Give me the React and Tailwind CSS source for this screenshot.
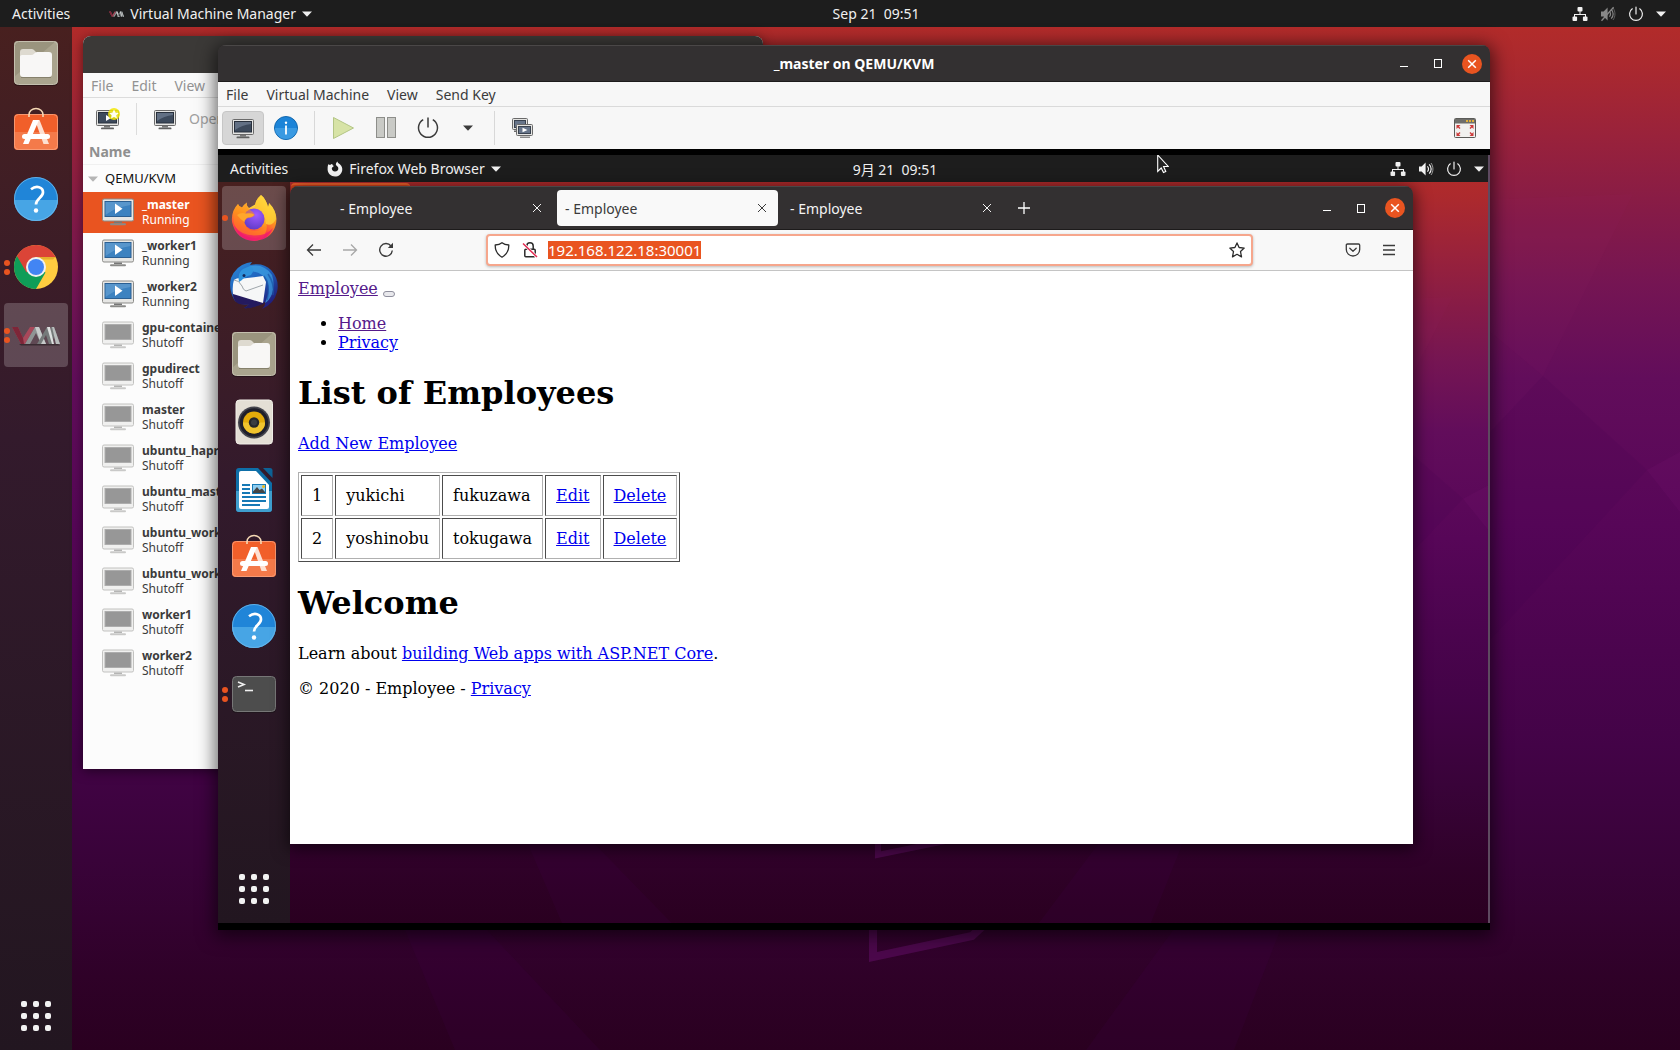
import { useEffect, useRef } from "react";

/* ---------- wallpaper ---------- */

function Wallpaper({ id }) {
  return (
    <svg
      className="absolute inset-0 h-full w-full"
      viewBox="0 0 1680 1050"
      preserveAspectRatio="none"
      aria-hidden="true"
    >
      <defs>
        <linearGradient id={id} x1="0" y1="0" x2="0" y2="1">
          <stop offset="0" stopColor="#b72d27" />
          <stop offset="0.06" stopColor="#ab292e" />
          <stop offset="0.13" stopColor="#99223b" />
          <stop offset="0.2" stopColor="#861b47" />
          <stop offset="0.27" stopColor="#751553" />
          <stop offset="0.36" stopColor="#620d5b" />
          <stop offset="0.5" stopColor="#570658" />
          <stop offset="0.62" stopColor="#4b044e" />
          <stop offset="0.71" stopColor="#430347" />
          <stop offset="0.82" stopColor="#390339" />
          <stop offset="0.93" stopColor="#2f0128" />
          <stop offset="1" stopColor="#2a0020" />
        </linearGradient>
      </defs>
      <rect width="1680" height="1050" fill={`url(#${id})`} />
      <polygon points="1543,376 1647,470 1490,640 1380,700 1490,432" fill="#3c0050" opacity="0.1" />
      <polygon points="1633,194 1543,376 1380,240 1480,200" fill="#b0307a" opacity="0.04" />
      <polygon points="1680,452 1647,470 1680,512" fill="#b0309a" opacity="0.07" />
      <polygon points="400,900 405,930 455,1050 600,1050 487,930 470,900" fill="#4a0058" opacity="0.12" />
      <polygon points="1195,900 1086,1050 1234,1050 1284,920" fill="#4a0058" opacity="0.12" />
      <path d="M873 880 V957 L972 936 L1000 910" fill="none" stroke="#5e0d60" strokeWidth="8" opacity="0.6" />
    </svg>
  );
}

/* ---------- shared pieces ---------- */

function CaretDown({ className = "" }) {
  return (
    <svg viewBox="0 0 10 6" className={`h-[6px] w-[10px] ${className}`} aria-hidden="true">
      <path d="M0 0.5H10L5 5.8Z" fill="currentColor" />
    </svg>
  );
}

function NetworkIcon() {
  return (
    <svg viewBox="0 0 16 16" className="size-4" aria-hidden="true">
      <g fill="#f2f2f2">
        <rect x="5.5" y="1" width="5" height="4.4" rx="1" />
        <rect x="0.5" y="10.6" width="4.6" height="4.4" rx="1" />
        <rect x="10.9" y="10.6" width="4.6" height="4.4" rx="1" />
        <path d="M7.5 5h1v3H14v3h-1V9H3v2H2V8h5.5z" />
      </g>
    </svg>
  );
}

function VolumeIcon({ muted }) {
  return (
    <svg viewBox="0 0 16 16" className="size-4" aria-hidden="true" opacity={muted ? 0.5 : 1}>
      <path d="M1 5.4h2.6L7.6 1.6V14.4L3.6 10.6H1z" fill="#f2f2f2" />
      <path d="M9.4 5.4a3.6 3.6 0 0 1 0 5.2M11.2 3.4c2.6 2.6 2.6 6.6 0 9.2" fill="none" stroke="#f2f2f2" strokeWidth="1.2" />
      <path d="M13 2c2.6 3.6 2.6 8.4 0 12" fill="none" stroke="#f2f2f2" strokeWidth="1" opacity="0.6" />
      {muted && <path d="M1.5 14.8L13.6 1.2" stroke="#f2f2f2" strokeWidth="1.3" />}
    </svg>
  );
}

function PowerIcon({ className = "size-4" }) {
  return (
    <svg viewBox="0 0 16 16" className={className} fill="none" stroke="currentColor" strokeWidth="1.2" strokeLinecap="round" aria-hidden="true">
      <path d="M4.3 2.8a6.4 6.4 0 1 0 7.4 0M8 1v7" />
    </svg>
  );
}

function VirtLogo({ className }) {
  return (
    <svg viewBox="0 0 48 22" className={className} aria-hidden="true">
      <path d="M7 20L46 20L48 21.5H9z" fill="#000" opacity="0.4" />
      <path d="M0 3H6L11 14L18 3H23L13 20H9Z" fill="#a8485a" />
      <path d="M0 3H6L11 14L12 20H9Z" fill="#7d2638" />
      <path d="M23 3L13 20H18L24 9L29 20H34L27 3Z" fill="#8f9494" />
      <path d="M23 3L29 20H34L27 3Z" fill="#c6caca" />
      <path d="M35 3L25 20H29L34 11L37 20H40L42 12L44 20H48L42 3H39L38 9L38 3Z" fill="#757a7a" />
      <path d="M35 3L40 20H42L38 3Z" fill="#dde0e0" />
      <path d="M40 3L44 20H48L42 3Z" fill="#b9bdbd" />
    </svg>
  );
}

function FirefoxSymbolic() {
  return (
    <svg viewBox="0 0 16 16" className="size-4" aria-hidden="true">
      <path
        d="M1.2 3.2C2 3.7 2.6 3.9 3.2 4C3.7 3.4 4.5 3 5.4 3.1C5.1 3.9 5.6 4.6 6.9 4.9C6.2 5.7 5.3 5.9 4.8 7C4.7 9 6 10.6 8 10.6C10.2 10.6 11.6 9 11.3 7C11.1 5.6 9.9 5.1 9.1 4.3C8.5 3.2 9 1.6 10.4 0.4C10.7 1.9 12 2.3 13.1 3.4C14.8 5 15.6 7 15.2 9.4C14.5 13 11.6 15.6 8 15.6C4 15.6 0.8 12.6 0.6 8.6C0.5 6.5 0.7 4.8 1.2 3.2Z"
        fill="#f2f2f2"
      />
    </svg>
  );
}

function TopBar({ appIcon, appName, clock, muted, clockPad, tail }) {
  return (
    <header className="flex h-[27px] shrink-0 items-center bg-[#1d1d1d] text-sm text-[#f0f0f0]">
      <div className="flex flex-1 items-center">
        <button className="ml-3 whitespace-nowrap">Activities</button>
        <button className="ml-[39px] flex items-center gap-1.5 whitespace-nowrap">
          {appIcon}
          <span>{appName}</span>
          <CaretDown />
        </button>
      </div>
      <button className={`shrink-0 whitespace-pre ${clockPad}`}>{clock}</button>
      <div className={`flex flex-1 items-center justify-end gap-3 ${tail}`}>
        <NetworkIcon />
        <VolumeIcon muted={muted} />
        <PowerIcon />
        <CaretDown />
      </div>
    </header>
  );
}

function WindowControls() {
  return (
    <div className="flex items-center gap-[14px] pr-2 text-white">
      <button aria-label="Minimize" className="grid size-5 place-items-center">
        <span className="mt-[5px] h-px w-2 bg-white" />
      </button>
      <button aria-label="Maximize" className="grid size-5 place-items-center">
        <span className="h-[9px] w-2 border border-white" />
      </button>
      <button aria-label="Close" className="grid size-5 place-items-center rounded-full bg-[#e95420]">
        <svg viewBox="0 0 10 10" className="size-[10px]" stroke="#fff" strokeWidth="1.5" aria-hidden="true">
          <path d="M1.2 1.2L8.8 8.8M8.8 1.2L1.2 8.8" />
        </svg>
      </button>
    </div>
  );
}

/* ---------- dock icons ---------- */

function FilesIcon() {
  return (
    <svg viewBox="0 0 48 48" className="size-12" aria-hidden="true">
      <rect x="2" y="3" width="44" height="44" rx="4" fill="#000" opacity="0.3" />
      <rect x="2" y="2" width="44" height="43.5" rx="4" fill="#aaa48e" />
      <path d="M2 38V6a4 4 0 0 1 4-4h38Z" fill="#9a947e" />
      <rect x="2.5" y="2.5" width="43" height="43" rx="4" fill="none" stroke="#c4bfae" />
      <path d="M8 13a3 3 0 0 1 3-3h9q1.5 0 2.5 1.5L25 14H38V20H8Z" fill="#dedad0" />
      <path d="M8 17.500q0-1.500 2-1.500h9q2 0 3-1.200T25 13h12a3 3 0 0 1 3 3v19a3 3 0 0 1-3 3H11a3 3 0 0 1-3-3Z" fill="#f8f7f6" />
      <path d="M9 38.500h30" stroke="#6f6a57" strokeWidth="1" opacity="0.6" />
    </svg>
  );
}

function SoftwareIcon() {
  return (
    <svg viewBox="0 2 48 48" className="size-12" aria-hidden="true">
      <rect x="2" y="9" width="44" height="36" rx="4" fill="#f15f2a" />
      <path d="M2 27h44v14a4 4 0 0 1-4 4H6a4 4 0 0 1-4-4z" fill="#f47a4a" />
      <rect x="2.5" y="9.5" width="43" height="35" rx="4" fill="none" stroke="#f9a47f" opacity="0.8" />
      <path d="M17 12V9.500a7 6 0 0 1 14 0v2.500" fill="none" stroke="#f6d9b5" strokeWidth="1.600" />
      <path d="M23 15H27.500L37 39H31.500Z" fill="#fde0d2" />
      <path d="M21 15H27L16.500 39H11Z" fill="#fff" />
      <rect x="10" y="29" width="28" height="5" rx="2.500" fill="#fff" />
    </svg>
  );
}

function HelpIcon() {
  return (
    <svg viewBox="0 0 48 48" className="size-12" aria-hidden="true">
      <circle cx="24" cy="24" r="22" fill="#2085d8" />
      <path d="M2 25a22 21 0 0 0 44 0z" fill="#47a5e5" />
      <circle cx="24" cy="24" r="21.5" fill="none" stroke="#6fb9ea" opacity="0.8" />
      <path d="M19 14.200C24.500 10 31 12 31 17.300C31 22.700 24 23.500 24 29.500" fill="none" stroke="#fff" strokeWidth="2.700" />
      <circle cx="24" cy="35.500" r="2.200" fill="#fff" />
    </svg>
  );
}

function ChromeIcon() {
  return (
    <svg viewBox="0 0 48 48" className="size-12" aria-hidden="true">
      <circle cx="24" cy="24" r="22" fill="#ffcd40" />
      <path d="M24 24L4.950 13A22 22 0 0 0 24 46L33.500 29.500Z" fill="#0f9d58" />
      <path d="M4.950 13A22 22 0 0 1 43.500 14H24L14.500 29.500Z" fill="#db4437" />
      <path d="M24 14H43.500L41 16.500H29Z" fill="#b5780b" opacity="0.35" />
      <circle cx="24" cy="24" r="10" fill="#f1f1f1" />
      <circle cx="24" cy="24" r="8" fill="#4285f4" />
    </svg>
  );
}

function FirefoxIcon() {
  return (
    <svg viewBox="0 0 48 48" className="size-12" aria-hidden="true">
      <defs>
        <linearGradient id="ffBody" x1="0.8" y1="0" x2="0.3" y2="1">
          <stop offset="0.1" stopColor="#ffe04a" />
          <stop offset="0.45" stopColor="#ff9a1f" />
          <stop offset="0.75" stopColor="#ff4a3e" />
          <stop offset="1" stopColor="#e31587" />
        </linearGradient>
        <radialGradient id="ffGlobe" cx="0.6" cy="0.3" r="0.8">
          <stop offset="0" stopColor="#a05bff" />
          <stop offset="1" stopColor="#5a38c4" />
        </radialGradient>
      </defs>
      <path d="M8 10Q9 13 12 13.500Q14 10.500 17 8.500Q16 12 19 14L28 9L42 22V32Q36 47 24 47Q6 46 2 28Q1 17 8 10Z" fill="url(#ffBody)" />
      <path d="M31 1C35 4 37 9 38 13Q39 11 39 9Q46 16 46.500 25Q46 41 31 46Q39 38 36 27Q33 18 25 14Q24 7 31 1Z" fill="url(#ffBody)" />
      <path d="M31 1C35 4 37 9 38 13Q39 11 39 9Q46 16 46 25Q42 33 36 30Q36 20 25 14Q24 7 31 1Z" fill="#ffd93b" opacity="0.75" />
      <circle cx="24" cy="25" r="10.5" fill="url(#ffGlobe)" />
      <path d="M8 10Q9 13 12 13.500Q14 10.500 17 8.500Q16 13 20 16Q24 18 25 21Q23 24 18 24Q14 26 15 30Q17 37 25 37Q33 37 37 30Q38 41 26 44Q10 43 4 30Q2 17 8 10Z" fill="#ff8a1c" opacity="0.55" />
      <path d="M7 21Q11 18 16 19.500Q21 18.500 24 20.500Q23.500 23 18 23.500Q14.500 25 14.500 28Q10 25 7 21Z" fill="#ffa62b" />
      <path d="M4 32Q10 46 24 46.500Q38 46 43 34Q36 42 24 41.500Q11 41 4 32Z" fill="#f0196f" opacity="0.75" />
    </svg>
  );
}

function ThunderbirdIcon() {
  return (
    <svg viewBox="0 0 48 48" className="size-12" aria-hidden="true">
      <defs>
        <linearGradient id="tbBody" x1="0" y1="0" x2="0.7" y2="1">
          <stop offset="0" stopColor="#2c8ad8" />
          <stop offset="0.5" stopColor="#1f62bd" />
          <stop offset="1" stopColor="#221d7c" />
        </linearGradient>
      </defs>
      <path d="M5 39Q-2 28 1 16Q6 4 17 1L22 0L20 3Q33 0 41 8Q50 18 47 30Q44 42 32 47Q36 43 35 40Q22 47 14 46Q18 44 19 42Q12 44 5 39Z" fill="url(#tbBody)" />
      <path d="M5 39Q2 33 3 29L35 41Q22 47 14 46Q18 44 19 42Q9 44 5 39Z" fill="#241a5e" />
      <path d="M20 4Q34 1 42 13Q45 22 42 32Q39 39 35 41Q41 30 37 19Q32 10 20 9Z" fill="#3fa4e6" opacity="0.7" />
      <path d="M34 14Q41 23 37 38M38 12Q45 22 43 33" fill="none" stroke="#1a55a8" strokeWidth="1.5" opacity="0.7" />
      <path d="M4 18Q8 15 13 16.500L33 14L36 20L33 41L3 32Q2 24 4 18Z" fill="#f6f7f7" />
      <path d="M4 18Q9 18 12 24Q13 28 16 29L33 23" fill="none" stroke="#9ea5aa" strokeWidth="1" />
      <path d="M9 20Q7 11 13 7L20 4Q26 7 21 13Q14 15 12 18Z" fill="#2f93dc" />
      <circle cx="14" cy="13.5" r="1.5" fill="#14285a" />
    </svg>
  );
}

function RhythmboxIcon() {
  return (
    <svg viewBox="0 0 48 48" className="size-12" aria-hidden="true">
      <rect x="6" y="2" width="36.5" height="44" rx="3.5" fill="#e4dfd5" stroke="#f2efe9" />
      <circle cx="24" cy="24.5" r="16" fill="#45454d" />
      <circle cx="24" cy="24.5" r="14.3" fill="#1f1f2b" />
      <circle cx="24" cy="24.5" r="11" fill="#e3ab0a" />
      <path d="M13 24.500a11 11 0 0 0 22 0z" fill="#f0c32e" />
      <circle cx="24" cy="24.5" r="5.2" fill="#25262b" />
      <circle cx="24" cy="24.5" r="3" fill="#3b3d42" />
    </svg>
  );
}

function WriterIcon() {
  return (
    <svg viewBox="0 0 48 48" className="size-12" aria-hidden="true">
      <path d="M9 2H28L42 17V43a3 3 0 0 1-3 3H9a3 3 0 0 1-3-3V5a3 3 0 0 1 3-3Z" fill="#0e6fa8" />
      <path d="M6 25H42V43a3 3 0 0 1-3 3H9a3 3 0 0 1-3-3Z" fill="#3f9fcf" />
      <path d="M33 2H40a2.500 2.500 0 0 1 2.500 2.500V12Z" fill="#0d6296" />
      <path d="M11 5H26L39 19V41a2 2 0 0 1-2 2H11a2 2 0 0 1-2-2V7a2 2 0 0 1 2-2Z" fill="#fff" />
      <g fill="#1679b5">
        <rect x="12" y="18" width="8" height="2" />
        <rect x="12" y="22" width="8" height="2" />
        <rect x="12" y="26" width="8" height="2" />
        <rect x="12" y="30" width="24" height="2" />
        <rect x="12" y="34" width="24" height="2" />
        <rect x="12" y="38" width="18" height="2" />
        <rect x="22" y="18" width="14" height="10" />
      </g>
      <rect x="23" y="19" width="12" height="8" fill="#8fcdf0" />
      <circle cx="33.5" cy="20.5" r="1.5" fill="#f0b81c" />
      <path d="M23 27V25.500L27 21L29.500 24L32 22.500L35 26V27Z" fill="#444" />
    </svg>
  );
}

function TerminalIcon() {
  return (
    <svg viewBox="0 0 48 48" className="size-12" aria-hidden="true">
      <rect x="2" y="7" width="44" height="36" rx="4" fill="#111" opacity="0.4" />
      <rect x="2.5" y="6.5" width="43" height="35" rx="4" fill="#4d4d4d" stroke="#777" />
      <path d="M8 12L14 14.500L8 17" fill="none" stroke="#f0f0f0" strokeWidth="1.6" />
      <path d="M15 20.500H23" stroke="#f0f0f0" strokeWidth="1.6" />
    </svg>
  );
}

function Dock({ apps }) {
  return (
    <nav
      aria-label="Dock"
      className="relative flex w-[72px] shrink-0 flex-col gap-1 bg-linear-to-b from-[#48201f] from-0% via-[#331a2c] via-40% to-[#221620] px-1 pt-1 pb-0.5"
    >
      {apps.map((a) => (
        <button
          key={a.name}
          aria-label={a.name}
          className={`relative grid size-16 shrink-0 place-items-center rounded ${a.active ? "bg-white/20" : ""}`}
        >
          <span className="absolute inset-y-0 left-0 flex w-1.5 flex-col justify-center gap-[3px]">
            {Array.from({ length: a.dots || 0 }, (_, i) => (
              <span key={i} className="size-1.5 rounded-full bg-[#e95420]" />
            ))}
          </span>
          {a.icon}
        </button>
      ))}
      <button aria-label="Show Applications" className="mt-auto grid size-16 shrink-0 place-content-center gap-1.5 [grid-template-columns:repeat(3,6px)]">
        {Array.from({ length: 9 }, (_, i) => (
          <span key={i} className="size-1.5 rounded-[2px] bg-[#f2f2f2]" />
        ))}
      </button>
    </nav>
  );
}

/* ---------- toolbar icons ---------- */

function ConsoleIcon({ className = "size-6" }) {
  return (
    <svg viewBox="0 0 24 24" className={className} aria-hidden="true">
      <rect x="1.5" y="3.5" width="21" height="15" rx="1" fill="#e4e4e2" stroke="#6a6a6a" />
      <rect x="3.5" y="5.5" width="17" height="10.5" fill="#3d4a5c" stroke="#28303c" />
      <path d="M4 6H20V8Q11 9 4 14Z" fill="#76849a" opacity="0.65" />
      <path d="M9 19h6v1.500h-6z" fill="#777" />
      <rect x="5.5" y="20.5" width="13" height="1.8" rx="0.9" fill="#5f6060" />
    </svg>
  );
}

function NewVmIcon() {
  return (
    <svg viewBox="0 0 24 24" className="size-6" aria-hidden="true">
      <rect x="0.5" y="3.5" width="22" height="15" rx="1" fill="#e4e4e2" stroke="#6a6a6a" />
      <rect x="2.5" y="5.5" width="18" height="10.5" fill="#3d4a5c" stroke="#28303c" />
      <path d="M10 8L15 11L10 14Z" fill="#fff" />
      <path d="M8 19h6v1.500H8z" fill="#777" />
      <rect x="5" y="20.5" width="13" height="1.8" rx="0.9" fill="#5f6060" />
      <circle cx="18" cy="7" r="6" fill="#f2e600" opacity="0.85" />
      <path d="M18 2.500L19.500 5.500L22.800 6L20.400 8.300L21 11.600L18 10L15 11.600L15.600 8.300L13.200 6L16.500 5.500Z" fill="#fffef0" />
    </svg>
  );
}

function InfoIcon() {
  return (
    <svg viewBox="0 0 24 24" className="size-6" aria-hidden="true">
      <circle cx="12" cy="12" r="11.5" fill="#1c84d8" stroke="#1468ad" />
      <path d="M1 12a11 11 0 0 0 22 0z" fill="#3a9ae2" />
      <circle cx="12" cy="6.8" r="1.2" fill="#fff" />
      <rect x="11.1" y="9.5" width="1.8" height="9" fill="#fff" />
    </svg>
  );
}

function PlayIcon() {
  return (
    <svg viewBox="0 0 24 24" className="size-6" aria-hidden="true">
      <path d="M2.500 1.500L22.500 12L2.500 22.500Z" fill="#d7e3a6" stroke="#b3c585" />
    </svg>
  );
}

function PauseIcon() {
  return (
    <svg viewBox="0 0 24 24" className="size-6" fill="#c9cac6" stroke="#8d8e8a" aria-hidden="true">
      <rect x="2.5" y="1.5" width="8" height="20" />
      <rect x="13.5" y="1.5" width="8" height="20" />
    </svg>
  );
}

function ShutDownIcon() {
  return (
    <svg viewBox="0 0 24 24" className="size-6" fill="none" stroke="currentColor" strokeWidth="1.5" aria-hidden="true">
      <path d="M7.200 3.600a9.500 9.500 0 1 0 9.600 0M12 1.500v10" />
    </svg>
  );
}

function SnapshotsIcon() {
  return (
    <svg viewBox="0 0 24 24" className="size-6" aria-hidden="true">
      <rect x="1.5" y="2.5" width="15" height="11" rx="1" fill="#e4e4e2" stroke="#6a6a6a" />
      <rect x="3.5" y="4.5" width="11" height="7" fill="#67758a" stroke="#39424f" />
      <rect x="3" y="14.5" width="5" height="1.5" fill="#6a6a6a" />
      <rect x="5.5" y="8.5" width="16" height="11" rx="1" fill="#e4e4e2" stroke="#6a6a6a" />
      <rect x="7.5" y="10.5" width="12" height="7" fill="#67758a" stroke="#39424f" />
      <path d="M11.500 11.800L16.500 14L11.500 16.200Z" fill="#fff" />
      <rect x="9" y="20.5" width="10" height="1.5" fill="#8a8a8a" />
    </svg>
  );
}

function FullscreenIcon() {
  return (
    <svg viewBox="0 0 24 24" className="size-6" aria-hidden="true">
      <rect x="1.5" y="2.5" width="21" height="19" rx="1" fill="#f1f1ef" stroke="#5b5b58" />
      <rect x="2" y="3" width="20" height="4.5" fill="#6e6e6a" />
      <g fill="#e0b03c">
        <rect x="13" y="4" width="2" height="2" />
        <rect x="16" y="4" width="2" height="2" />
        <rect x="19" y="4" width="2" height="2" />
      </g>
      <g fill="#cc3b3b">
        <path d="M3.500 9H7.500L6 10.500L7.500 12L6.500 13L5 11.500L3.500 13Z" />
        <path d="M20.500 9H16.500L18 10.500L16.500 12L17.500 13L19 11.500L20.500 13Z" />
        <path d="M3.500 20H7.500L6 18.500L7.500 17L6.500 16L5 17.500L3.500 16Z" />
        <path d="M20.500 20H16.500L18 18.500L16.500 17L17.500 16L19 17.500L20.500 16Z" />
      </g>
    </svg>
  );
}

function GuestIcon({ running }) {
  return (
    <svg viewBox="0 0 32 28" className="h-7 w-8 shrink-0" aria-hidden="true">
      <rect x="0.5" y="1" width="31" height="22" rx="1.5" fill={running ? "#e6e6e4" : "#f0f0ef"} stroke={running ? "#8b8b88" : "#c2c2c0"} />
      <rect x="3" y="3.5" width="26" height="15" fill={running ? "#3c82c0" : "#979797"} stroke={running ? "#2b5f92" : "#adadad"} />
      {running && <path d="M3.500 4H28.500V7Q14 9 3.500 17Z" fill="#73a9d8" opacity="0.5" />}
      {running && <path d="M13 5.500L20.500 10.800L13 16Z" fill="#fff" />}
      <path d="M12 23.500h8v1.500h-8z" fill={running ? "#777" : "#b5b5b4"} />
      <rect x="8" y="25.3" width="16" height="2" rx="1" fill={running ? "#8a8a88" : "#c9c9c8"} />
    </svg>
  );
}

/* ---------- virtual machine manager ---------- */

const machines = [
  { name: "_master", state: "Running" },
  { name: "_worker1", state: "Running" },
  { name: "_worker2", state: "Running" },
  { name: "gpu-container", state: "Shutoff" },
  { name: "gpudirect", state: "Shutoff" },
  { name: "master", state: "Shutoff" },
  { name: "ubuntu_haproxy", state: "Shutoff" },
  { name: "ubuntu_master", state: "Shutoff" },
  { name: "ubuntu_worker1", state: "Shutoff" },
  { name: "ubuntu_worker2", state: "Shutoff" },
  { name: "worker1", state: "Shutoff" },
  { name: "worker2", state: "Shutoff" },
];

function ManagerWindow() {
  return (
    <section
      aria-label="Virtual Machine Manager"
      className="absolute top-[9px] left-[11px] w-[680px] overflow-hidden rounded-t-lg bg-[#fcfcfc] pb-[85px] shadow-[0_2px_12px_rgba(0,0,0,0.5)]"
    >
      <div className="h-[37px] bg-[#3b3937]" />
      <div className="flex h-[25px] items-center gap-0.5 border-b border-[#dcdcdc] bg-[#fafafa] pt-0.5 text-sm text-[#929292]">
        <button className="px-2">File</button>
        <button className="px-2">Edit</button>
        <button className="px-2">View</button>
      </div>
      <div className="flex h-[42px] items-center bg-[#fafafa] text-sm text-[#a0a0a0]">
        <button aria-label="New virtual machine" className="ml-[13px]">
          <NewVmIcon />
        </button>
        <span className="mx-4 h-8 w-px bg-[#dcdcdc]" />
        <button className="flex items-center gap-3">
          <ConsoleIcon />
          Open
        </button>
      </div>
      <div className="flex h-[25px] items-center border-b border-[#f0f0f0] px-1.5 text-sm font-bold text-[#8f8f8f]">Name</div>
      <div className="flex h-[27px] items-center gap-[7px] pl-[5px] text-[13px] text-[#111]">
        <CaretDown className="text-[#b5b5b5]" />
        QEMU/KVM
      </div>
      <ul>
        {machines.map((m, i) => (
          <li
            key={m.name}
            className={`flex h-[41px] items-center gap-2 pb-0.5 pl-[19px] text-xs leading-[15px] ${i === 0 ? "bg-[#e95420] text-white" : "text-[#3b3b3b]"}`}
          >
            <GuestIcon running={m.state === "Running"} />
            <div>
              <div className="font-bold">{m.name}</div>
              <div>{m.state}</div>
            </div>
          </li>
        ))}
      </ul>
    </section>
  );
}

/* ---------- guest browser ---------- */

function Tab({ active }) {
  return (
    <div
      className={`flex h-9 w-[221px] items-center justify-between rounded pr-2.5 pl-2 ${active ? "bg-[#f9f9f9] text-[#3b3b3b]" : "text-[#f4f4f4]"}`}
    >
      <button className="pt-0.5">- Employee</button>
      <button aria-label="Close tab" className="grid size-3 place-items-center">
        <svg viewBox="0 0 8 8" className="size-2" stroke="currentColor" strokeWidth="1" aria-hidden="true">
          <path d="M0 0L8 8M8 0L0 8" />
        </svg>
      </button>
    </div>
  );
}

function AddressBar() {
  const ref = useRef(null);
  useEffect(() => {
    ref.current.focus({ preventScroll: true });
    ref.current.select();
  }, []);
  return (
    <div className="mx-auto flex h-8 flex-1 items-center rounded border-2 border-[#f6a68c] bg-white px-1.5 shadow-[0_1px_3px_rgba(0,0,0,0.25)]">
      <svg viewBox="0 0 16 16" className="size-4 shrink-0" fill="none" stroke="#2b2b2b" strokeWidth="1.3" strokeLinejoin="round" aria-hidden="true">
        <path d="M8 0.800Q10.500 3 14.800 3Q15 11 8 15.200Q1 11 1.200 3Q5.500 3 8 0.800Z" />
      </svg>
      <svg viewBox="0 0 16 16" className="ml-3 size-4 shrink-0" fill="none" stroke="#2b2b2b" strokeWidth="1.5" aria-hidden="true">
        <path d="M4.800 7V4a3.200 3.200 0 0 1 6.400 0V7" />
        <rect x="2.8" y="7.3" width="10.4" height="7.5" rx="1" />
        <path d="M1 1.500L15 15" stroke="#fff" strokeWidth="3" />
        <path d="M1 1.500L15 15" stroke="#e22850" strokeWidth="1.5" />
      </svg>
      <input
        ref={ref}
        aria-label="Address"
        defaultValue="192.168.122.18:30001"
        className="ml-[10px] h-[18px] min-w-0 flex-1 bg-transparent text-[15px] leading-[18px] text-[#2b2b2b] outline-none selection:bg-[#e95420] selection:text-white"
      />
      <button aria-label="Bookmark">
        <svg viewBox="0 0 16 16" className="size-4" fill="none" stroke="#2b2b2b" strokeWidth="1.3" strokeLinejoin="round" aria-hidden="true">
          <path d="M8 0.900L10.100 5.500L15.200 6.100L11.500 9.500L12.500 14.900L8 12.300L3.500 14.900L4.500 9.500L0.800 6.100L5.900 5.500Z" />
        </svg>
      </button>
    </div>
  );
}

const employees = [
  [1, "yukichi", "fukuzawa"],
  [2, "yoshinobu", "tokugawa"],
];

function BlueLink({ children, visited }) {
  return (
    <a href="#" className={`underline ${visited ? "text-[#551a8b]" : "text-[#0000ee]"}`}>
      {children}
    </a>
  );
}

const cell = "border border-t-[#4c4c4c] border-r-[#b0b0b0] border-b-[#b0b0b0] border-l-[#4c4c4c] p-2.5";

function EmployeePage() {
  return (
    <main className="flex-1 overflow-hidden bg-white p-2 font-['DejaVu_Serif',serif] text-base leading-[19px] text-black">
      <div>
        <BlueLink visited>Employee</BlueLink>{" "}
        <button aria-label="Toggle navigation" className="h-1.5 w-3 rounded-[3px] border border-[#8f8f9d] bg-[#e9e9ed] align-[-2px]" />
      </div>
      <ul className="mt-4 list-disc pl-10">
        <li>
          <BlueLink visited>Home</BlueLink>
        </li>
        <li>
          <BlueLink>Privacy</BlueLink>
        </li>
      </ul>
      <h1 className="mt-[23px] text-[32px] leading-[37px] font-bold">List of Employees</h1>
      <p className="mt-[22px]">
        <BlueLink>Add New Employee</BlueLink>
      </p>
      <table className="mt-[19px] border-separate border-spacing-[2px] border border-t-[#b0b0b0] border-r-[#4c4c4c] border-b-[#4c4c4c] border-l-[#b0b0b0]">
        <tbody>
          {employees.map(([id, first, last]) => (
            <tr key={id}>
              <td className={cell}>{id}</td>
              <td className={cell}>{first}</td>
              <td className={cell}>{last}</td>
              <td className={cell}>
                <BlueLink>Edit</BlueLink>
              </td>
              <td className={cell}>
                <BlueLink>Delete</BlueLink>
              </td>
            </tr>
          ))}
        </tbody>
      </table>
      <h1 className="mt-[23px] text-[32px] leading-[37px] font-bold">Welcome</h1>
      <p className="mt-[22px]">
        Learn about <BlueLink>building Web apps with ASP.NET Core</BlueLink>.
      </p>
      <footer className="mt-4">
        © 2020 - Employee - <BlueLink>Privacy</BlueLink>
      </footer>
    </main>
  );
}

function BrowserWindow() {
  return (
    <section aria-label="Firefox" className="absolute top-1 right-[75px] bottom-[79px] left-0 flex flex-col overflow-hidden rounded-t-lg shadow-[0_3px_16px_2px_rgba(0,0,0,0.6)]">
      <div className="flex h-11 shrink-0 items-center border-t border-b border-t-[#4a4747] border-b-[#1d1b1b] bg-[#333031] pl-[42px] text-sm">
        <div className="flex items-center gap-1">
          <Tab />
          <Tab active />
          <Tab />
        </div>
        <button aria-label="New tab" className="ml-[15px] text-white">
          <svg viewBox="0 0 12 12" className="size-3" stroke="currentColor" strokeWidth="1.3" aria-hidden="true">
            <path d="M6 0V12M0 6H12" />
          </svg>
        </button>
        <div className="ml-auto">
          <WindowControls />
        </div>
      </div>
      <div className="flex h-[41px] shrink-0 items-center border-b border-[#c4c4c4] bg-[#f8f8f8] text-[#3b3b3b]">
        <div className="flex w-[196px] items-center gap-5 pl-4">
          <button aria-label="Back">
            <svg viewBox="0 0 16 16" className="size-4" fill="none" stroke="currentColor" strokeWidth="1.3" aria-hidden="true">
              <path d="M15 8H1.500M7 2.500L1.500 8L7 13.500" />
            </svg>
          </button>
          <button aria-label="Forward" className="text-[#a8a8a8]">
            <svg viewBox="0 0 16 16" className="size-4" fill="none" stroke="currentColor" strokeWidth="1.3" aria-hidden="true">
              <path d="M1 8H14.500M9 2.500L14.500 8L9 13.500" />
            </svg>
          </button>
          <button aria-label="Reload">
            <svg viewBox="0 0 16 16" className="size-4" fill="none" stroke="currentColor" strokeWidth="1.4" aria-hidden="true">
              <path d="M13 4A6.300 6.300 0 1 0 14.300 8.500" />
              <path d="M15 0.800V6H9.800Z" fill="currentColor" stroke="none" />
            </svg>
          </button>
        </div>
        <AddressBar />
        <div className="flex w-40 items-center justify-end gap-5 pr-4">
          <button aria-label="Save to Pocket">
            <svg viewBox="0 0 16 16" className="size-4" fill="none" stroke="currentColor" strokeWidth="1.3" strokeLinecap="round" strokeLinejoin="round" aria-hidden="true">
              <path d="M2.500 2H13.500Q14.700 2 14.700 3.200V7.500A6.700 6.500 0 0 1 1.300 7.500V3.200Q1.300 2 2.500 2Z" />
              <path d="M4.800 6.200L8 9.300L11.200 6.200" />
            </svg>
          </button>
          <button aria-label="Menu">
            <svg viewBox="0 0 16 16" className="size-4" stroke="currentColor" strokeWidth="1.3" aria-hidden="true">
              <path d="M2 3.500H14M2 8H14M2 12.500H14" />
            </svg>
          </button>
        </div>
      </div>
      <EmployeePage />
    </section>
  );
}

const guestApps = [
  { name: "Firefox Web Browser", icon: <FirefoxIcon />, dots: 1, active: true },
  { name: "Thunderbird Mail", icon: <ThunderbirdIcon /> },
  { name: "Files", icon: <FilesIcon /> },
  { name: "Rhythmbox", icon: <RhythmboxIcon /> },
  { name: "LibreOffice Writer", icon: <WriterIcon /> },
  { name: "Ubuntu Software", icon: <SoftwareIcon /> },
  { name: "Help", icon: <HelpIcon /> },
  { name: "Terminal", icon: <TerminalIcon />, dots: 2 },
];

function GuestScreen() {
  return (
    <div className="relative flex min-h-0 flex-1 flex-col overflow-hidden border-r-2 border-[#5e4a60]">
      <Wallpaper id="guestSky" />
      <div className="relative flex min-h-0 flex-1 flex-col">
        <TopBar appIcon={<FirefoxSymbolic />} appName="Firefox Web Browser" clock="9月 21  09:51" clockPad="pl-[88px] pt-0.5" tail="pr-1" />
        <div className="flex min-h-0 flex-1">
          <Dock apps={guestApps} />
          <div className="relative flex-1">
            <div className="absolute top-px left-px h-2 w-[119px] rounded-t border-t-2 border-[#f2602a] bg-[#d8441c]" />
            <BrowserWindow />
          </div>
        </div>
      </div>
      <svg viewBox="0 0 12 19" className="absolute top-0 left-[939px] h-[19px] w-3" aria-hidden="true">
        <path d="M0.700 0V16.500L4.200 13L6.500 17.500L8.800 16.500L6.600 11.500H11.200Z" fill="#222" stroke="#fff" strokeWidth="1.1" />
      </svg>
    </div>
  );
}

function ConsoleWindow() {
  return (
    <section
      aria-label="_master on QEMU/KVM"
      className="absolute top-[18px] right-[190px] bottom-[120px] left-[146px] flex flex-col overflow-hidden rounded-t-lg shadow-[0_3px_18px_3px_rgba(0,0,0,0.6)]"
    >
      <div className="flex h-[37px] shrink-0 items-center border-t border-b border-t-[#4a4747] border-b-[#1d1b1b] bg-[#333031] text-sm text-white">
        <div className="flex-1" />
        <h2 className="font-bold">_master on QEMU/KVM</h2>
        <div className="flex flex-1 justify-end">
          <WindowControls />
        </div>
      </div>
      <div className="flex h-[25px] shrink-0 items-center gap-0.5 border-b border-[#dadada] bg-[#f7f7f7] pt-0.5 text-sm text-[#3b3b3b]">
        <button className="px-2">File</button>
        <button className="px-2">Virtual Machine</button>
        <button className="px-2">View</button>
        <button className="px-2">Send Key</button>
      </div>
      <div className="flex h-[42px] shrink-0 items-center bg-[#f7f7f7] px-1 text-[#3b3b3b]">
        <button aria-label="Show the graphical console" className="grid h-[34px] w-[42px] place-items-center rounded border border-[#c6c6c6] bg-[#d6d6d6]">
          <ConsoleIcon />
        </button>
        <button aria-label="Show virtual hardware details" className="ml-[10px]">
          <InfoIcon />
        </button>
        <span className="mx-4 h-[34px] w-px bg-[#d8d8d8]" />
        <button aria-label="Run">
          <PlayIcon />
        </button>
        <button aria-label="Pause" className="ml-[19px]">
          <PauseIcon />
        </button>
        <button aria-label="Shut down" className="ml-[18px]">
          <ShutDownIcon />
        </button>
        <button aria-label="Shut down options" className="ml-[23px]">
          <CaretDown />
        </button>
        <span className="mx-4 ml-[21px] h-[34px] w-px bg-[#d8d8d8]" />
        <button aria-label="Manage snapshots">
          <SnapshotsIcon />
        </button>
        <button aria-label="Full screen" className="mr-[9px] ml-auto">
          <FullscreenIcon />
        </button>
      </div>
      <div className="flex min-h-0 flex-1 flex-col bg-black pt-1.5 pb-[7px]">
        <GuestScreen />
      </div>
    </section>
  );
}

const hostApps = [
  { name: "Files", icon: <FilesIcon /> },
  { name: "Ubuntu Software", icon: <SoftwareIcon /> },
  { name: "Help", icon: <HelpIcon /> },
  { name: "Google Chrome", icon: <ChromeIcon />, dots: 2 },
  { name: "Virtual Machine Manager", icon: <VirtLogo className="h-[22px] w-12" />, dots: 2, active: true },
];

export default function App() {
  return (
    <div className="relative flex h-screen w-full flex-col overflow-hidden font-['Noto_Sans','Noto_Sans_CJK_JP',sans-serif]">
      <Wallpaper id="hostSky" />
      <div className="relative flex min-h-0 flex-1 flex-col">
        <TopBar
          appIcon={<VirtLogo className="h-[8px] w-[15px]" />}
          appName="Virtual Machine Manager"
          clock="Sep 21  09:51"
          clockPad="pl-[86px]"
          muted
          tail="pr-[14px]"
        />
        <div className="flex min-h-0 flex-1">
          <Dock apps={hostApps} />
          <div className="relative flex-1">
            <ManagerWindow />
            <ConsoleWindow />
          </div>
        </div>
      </div>
    </div>
  );
}
